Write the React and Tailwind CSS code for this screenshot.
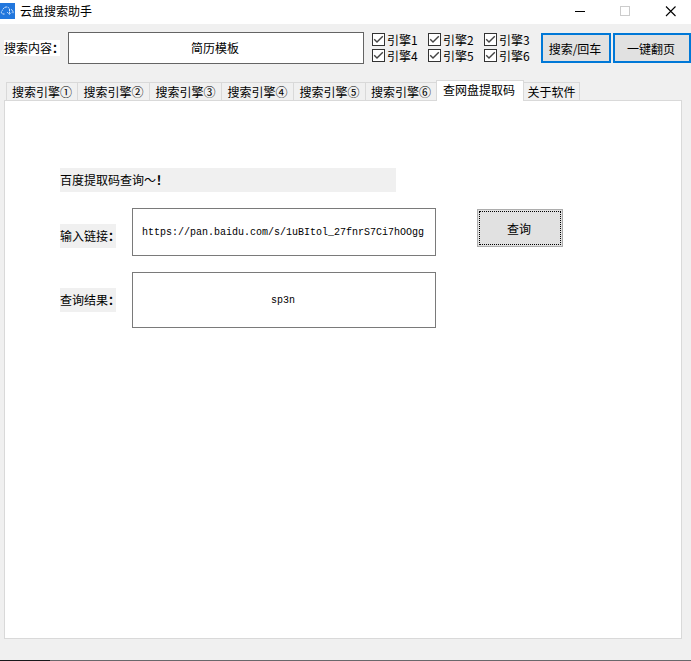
const TABS = ["搜索引擎①", "搜索引擎②", "搜索引擎③", "搜索引擎④", "搜索引擎⑤", "搜索引擎⑥"];
const ROWS = [["引擎1", "引擎2", "引擎3"], ["引擎4", "引擎5", "引擎6"]];

function Check({ label }) {
  return (
    <div className="flex h-4 w-14 items-start gap-[3px]">
      <svg width="13" height="13" viewBox="0 0 13 13" className="mt-px shrink-0">
        <rect x="0.5" y="0.5" width="12" height="12" fill="#fff" stroke="#333" />
        <path d="M2.2 6.2 L5 9 L10.8 3.2" fill="none" stroke="#444" strokeWidth="1.4" />
      </svg>
      <span className="-ml-px whitespace-nowrap">{label}</span>
    </div>
  );
}

function Colon() {
  return <span className="font-bold [font-feature-settings:'halt']">：</span>;
}

function TitleBar() {
  return (
    <header className="flex h-6 shrink-0 bg-white">
      <svg width="15" height="16" viewBox="0 0 15 16" className="mt-[3px]">
        <rect width="15" height="16" fill="#2277dd" />
        <path d="M4.5 11H2.8A2 2 0 0 1 1.8 7.8C2.4 7 3.2 7 3.2 6.2C3.8 4.6 5 4 6.5 4C8.5 4 9.5 5.2 9.5 7V11.2M7.2 9.2L9.5 11.4L11.2 9.6M11 6.5C12.8 7 13.4 8.5 12.8 10.8" fill="none" stroke="#d9eaff" strokeWidth="1" strokeDasharray="2 0.6" />
      </svg>
      <h1 className="ml-[5px] grow leading-[22px]">云盘搜索助手</h1>
      <svg width="102" height="24" viewBox="0 0 102 24" className="mr-[14px]" fill="none">
        <path d="M0 11.5H10" stroke="#000" />
        <rect x="45.5" y="6.5" width="9" height="9" stroke="#ccc" />
        <path d="M91 6.5L100.5 16M100.5 6.5L91 16" stroke="#000" strokeWidth="1.1" />
      </svg>
    </header>
  );
}

export default function App() {
  return (
    <div className="flex h-[661px] w-[691px] flex-col overflow-hidden bg-[#f0f0f0] font-['Noto_Sans_CJK_SC',sans-serif] text-[12px] leading-4 text-black">
      <TitleBar />
      <div className="flex h-14 shrink-0 items-start pt-2 pl-1">
        <label className="mt-2 h-4 w-14 bg-white whitespace-nowrap">搜索内容<Colon /></label>
        <div className="ml-2 flex h-8 w-[296px] items-center justify-center border border-[#646464] bg-white pr-[2px]">简历模板</div>
        <div className="ml-2 w-[169px]">
          {ROWS.map((row) => (
            <div key={row[0]} className="flex">
              {row.map((label) => <Check key={label} label={label} />)}
            </div>
          ))}
        </div>
        <button className="mt-px h-[30px] w-[70px] border-2 border-[#0078d7] bg-[#e1e1e1] pt-[2px] pr-[2px] whitespace-nowrap">搜索/回车</button>
        <button className="mt-px ml-[2px] h-[30px] w-[78px] border-2 border-[#0078d7] bg-[#e1e1e1] pt-[2px] pr-[2px] whitespace-nowrap">一键翻页</button>
      </div>

      <nav className="z-10 -mb-px flex h-[21px] shrink-0 items-end pl-[6px]">
        {TABS.map((tab, i) => (
          <div key={tab} className={`mb-px h-[18px] border-t border-r border-[#d9d9d9] text-center leading-[17px] whitespace-nowrap ${i === 0 ? "w-[72px] border-l" : i === 5 ? "w-[70px] border-r-0" : "w-[72px]"}`}>{tab}</div>
        ))}
        <div className="h-[21px] w-[88px] border border-b-0 border-[#d9d9d9] bg-white pr-[2px] text-center leading-[18px]">查网盘提取码</div>
        <div className="mb-px h-[18px] w-[56px] border-t border-r border-[#d9d9d9] text-center leading-[17px] whitespace-nowrap">关于软件</div>
      </nav>

      <main className="ml-1 h-[539px] w-[678px] shrink-0 border border-[#d9d9d9] bg-white pt-[67px] pl-[55px]">
        <p className="h-6 w-[336px] bg-[#f0f0f0] leading-6">百度提取码查询～<span className="font-bold">！</span></p>
        <div className="mt-4 flex h-12">
          <label className="mt-4 h-6 w-14 bg-[#f0f0f0] leading-6 whitespace-nowrap">输入链接<Colon /></label>
          <div className="ml-4 flex w-[304px] items-center justify-center border border-[#7a7a7a] pt-[2px] pr-[2px] font-['Liberation_Mono',monospace] text-[10px]">https://pan.baidu.com/s/1uBItol_27fnrS7Ci7hOOgg</div>
          <button className="mt-px ml-[41px] h-[38px] w-[86px] border border-[#adadad] bg-[#e1e1e1] p-px">
            <span className="flex h-full items-center justify-center border border-dotted border-black pt-[2px] pr-[2px]">查询</span>
          </button>
        </div>
        <div className="mt-4 flex h-14">
          <label className="mt-4 h-6 w-14 bg-[#f0f0f0] leading-6 whitespace-nowrap">查询结果<Colon /></label>
          <div className="ml-4 flex w-[304px] items-center justify-center border border-[#7a7a7a] pt-[2px] pr-[2px] font-['Liberation_Mono',monospace] text-[10px]">sp3n</div>
        </div>
      </main>

      <div className="mt-auto flex h-px shrink-0">
        <div className="w-[50px] bg-[#18181b]" />
        <div className="grow bg-[#68686b]" />
      </div>
    </div>
  );
}
